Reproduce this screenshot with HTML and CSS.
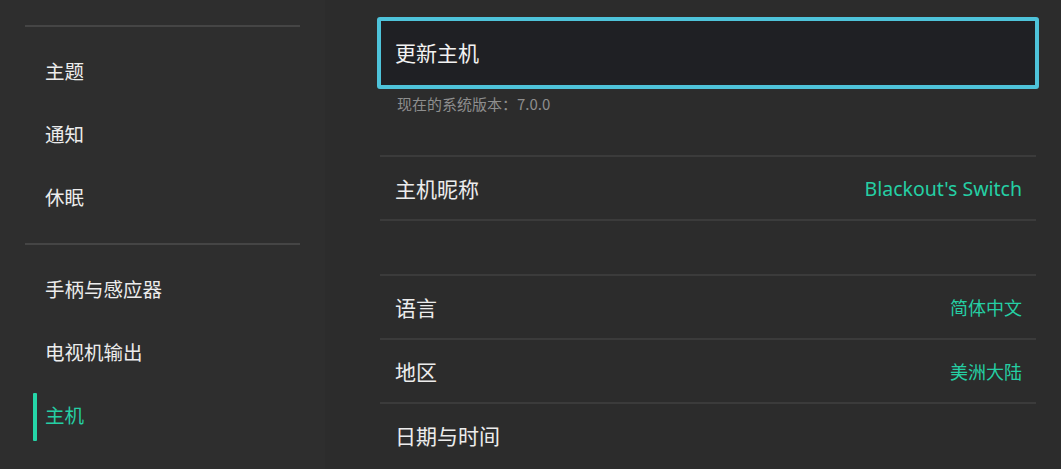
FILE: index.html
```html
<!DOCTYPE html>
<html lang="zh-CN">
<head>
<meta charset="utf-8">
<title>主机设置</title>
<link rel="stylesheet" href="styles.css">
</head>
<body>
<div class="screen">
  <nav class="sidebar">
    <div class="sep sep-top"></div>
    <ul class="menu">
      <li class="menu-item">主题</li>
      <li class="menu-item">通知</li>
      <li class="menu-item">休眠</li>
    </ul>
    <div class="sep sep-mid"></div>
    <ul class="menu">
      <li class="menu-item">手柄与感应器</li>
      <li class="menu-item">电视机输出</li>
      <li class="menu-item active">主机</li>
    </ul>
  </nav>
  <main class="content">
    <div class="focus-box">更新主机</div>
    <div class="subtitle">现在的系统版本：7.0.0</div>
    <div class="group group-one">
      <div class="row"><span class="label">主机昵称</span><span class="value latin">Blackout's Switch</span></div>
    </div>
    <div class="group group-two">
      <div class="row"><span class="label">语言</span><span class="value">简体中文</span></div>
      <div class="row"><span class="label">地区</span><span class="value">美洲大陆</span></div>
      <div class="row"><span class="label">日期与时间</span><span class="value"></span></div>
    </div>
  </main>
</div>
</body>
</html>
```

FILE: styles.css
```css
* { box-sizing: border-box; }
html, body {
  margin: 0;
  padding: 0;
  background: #2d2d2d;
  height: 100%;
  overflow: hidden;
}
body {
  font-family: "Noto Sans CJK SC", "Noto Sans", sans-serif;
  color: #ebebeb;
}
.screen {
  display: flex;
  width: 1061px;
  height: 469px;
}
.sidebar {
  width: 325px;
  flex: 0 0 325px;
  padding: 25px 25px 0 25px;
  background: #2e2e2e;
}
.sep {
  height: 2px;
  background: #454545;
}
.menu {
  list-style: none;
  margin: 0;
  padding: 12px 0 0 0;
}
.menu-item {
  position: relative;
  height: 63px;
  line-height: 63px;
  padding-left: 20px;
  font-size: 19.5px;
  color: #ececec;
}
.menu-item.active {
  color: #25cfa4;
}
.menu-item.active::before {
  content: "";
  position: absolute;
  left: 8px;
  top: 10px;
  width: 4px;
  height: 48px;
  background: #25d6a8;
  border-radius: 1px;
}
.sep-mid {
  margin-top: 15px;
}
.content {
  flex: 1;
  padding: 17px 22px 0 52px;
  background: #2c2c2c;
}
.focus-box {
  height: 72px;
  border: 4px solid #4ec3da;
  border-radius: 3px;
  background: #1f2024;
  padding-left: 14px;
  font-size: 21px;
  line-height: 62px;
  color: #f2f2f2;
}
.subtitle {
  margin-top: 5px;
  padding-left: 20px;
  font-size: 15px;
  line-height: 20px;
  color: #8e8e8e;
}
.group {
  margin: 0 3px;
}
.group-one {
  margin-top: 41px;
  border-bottom: 2px solid #3b3b3b;
}
.group-two {
  margin-top: 53px;
}
.row {
  display: flex;
  align-items: center;
  justify-content: space-between;
  height: 64px;
  border-top: 2px solid #3b3b3b;
  padding: 0 14px 0 15px;
}
.label {
  font-size: 21px;
  color: #ececec;
}
.value {
  font-size: 18px;
  color: #25cfa4;
}
.value.latin {
  font-family: "Noto Sans", "Noto Sans CJK SC", sans-serif;
  font-size: 19.5px;
}
```
